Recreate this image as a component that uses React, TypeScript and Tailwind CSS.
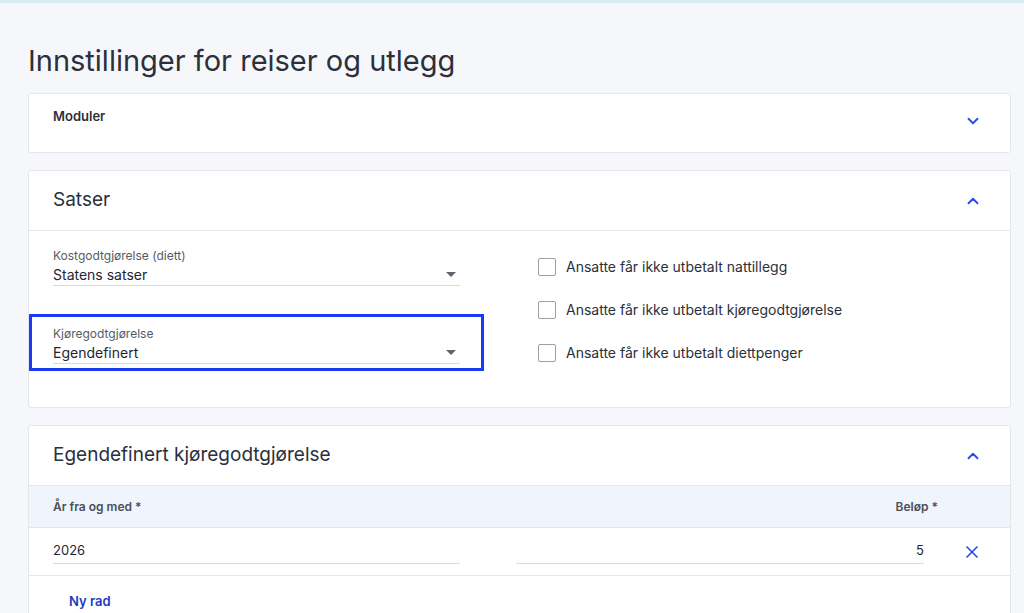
import { ChevronDown, ChevronUp, X } from "lucide-react";

function Select({ label, value }: { label: string; value: string }) {
  return (
    <div className="w-[407px]">
      <div className="text-[12px] leading-[14px] text-[#555b66]">{label}</div>
      <div className="flex h-[23px] items-center justify-between border-b border-[#d6d9de]">
        <span className="text-[14px] text-[#1f2633]">{value}</span>
        <svg width="10" height="5" viewBox="0 0 10 5" className="mr-[4px]">
          <path d="M0 0h10L5 5z" fill="#5f6570" />
        </svg>
      </div>
    </div>
  );
}

function Check({ label }: { label: string }) {
  return (
    <label className="flex items-center gap-[10px] text-[14px] text-[#2b303a]">
      <span className="h-[18px] w-[18px] rounded-[2px] border border-[#9aa0a8] bg-white" />
      {label}
    </label>
  );
}

export default function App() {
  return (
    <div
      className="min-h-[613px] border-t-[3px] border-[#d9ecef] bg-[#f6f7fa] pl-[28px] pr-[13px]"
      style={{ fontFamily: "Inter, 'Noto Sans', sans-serif" }}
    >
      <h1 className="pt-[40px] text-[29px] leading-[36px] text-[#2a303c]">
        Innstillinger for reiser og utlegg
      </h1>

      <div className="mt-[14px] flex h-[60px] justify-between rounded-[3px] border border-[#e4e6ea] bg-white pl-[24px] pr-[28px]">
        <div className="pt-[13px] text-[13px] font-semibold text-[#2a303c]">Moduler</div>
        <ChevronDown className="mt-[18px] h-[18px] w-[18px] text-[#2a4df0]" strokeWidth={2.5} />
      </div>

      <div className="mt-[17px] rounded-[3px] border border-[#e4e6ea] bg-white">
        <div className="flex h-[60px] items-center justify-between border-b border-[#e4e6ea] pl-[24px] pr-[28px]">
          <span className="text-[19px] text-[#2a303c]">Satser</span>
          <ChevronUp className="h-[18px] w-[18px] text-[#2a4df0]" strokeWidth={2.5} />
        </div>
        <div className="flex pb-[36px] pl-[24px] pt-[18px]">
          <div className="flex flex-col gap-[28px]">
            <Select label="Kostgodtgjørelse (diett)" value="Statens satser" />
            <div className="-mx-[24px] border-[3px] border-[#1b3bf2] px-[21px] pb-[4px] pt-[10px]">
              <Select label="Kjøregodtgjørelse" value="Egendefinert" />
            </div>
          </div>
          <div className="ml-[78px] flex flex-col gap-[22px] pt-[7px]">
            <Check label="Ansatte får ikke utbetalt nattillegg" />
            <Check label="Ansatte får ikke utbetalt kjøregodtgjørelse" />
            <Check label="Ansatte får ikke utbetalt diettpenger" />
          </div>
        </div>
      </div>

      <div className="mt-[17px] rounded-[3px] border border-[#e4e6ea] bg-white">
        <div className="flex h-[60px] items-center justify-between border-b border-[#e4e6ea] pl-[24px] pr-[28px]">
          <span className="text-[19px] text-[#2a303c]">Egendefinert kjøregodtgjørelse</span>
          <ChevronUp className="h-[18px] w-[18px] text-[#2a4df0]" strokeWidth={2.5} />
        </div>
        <div className="flex h-[42px] items-center justify-between border-b border-[#e4e6ea] bg-[#f0f4fc] pl-[24px] pr-[72px] text-[12px] font-semibold text-[#4a4f58]">
          <span>År fra og med *</span>
          <span>Beløp *</span>
        </div>
        <div className="flex h-[48px] items-center border-b border-[#e4e6ea] pl-[24px]">
          <div className="flex h-[24px] w-[407px] items-center border-b border-[#d6d9de] text-[13px] text-[#1f2633]">2026</div>
          <div className="ml-[56px] flex h-[24px] w-[408px] items-center justify-end border-b border-[#d6d9de] text-[13px] text-[#1f2633]">5</div>
          <X className="ml-[38px] h-[20px] w-[20px] text-[#2a4df0]" strokeWidth={2} />
        </div>
        <div className="flex h-[52px] items-center pl-[40px] text-[13px] font-semibold text-[#1b3bc0]">Ny rad</div>
      </div>
    </div>
  );
}
